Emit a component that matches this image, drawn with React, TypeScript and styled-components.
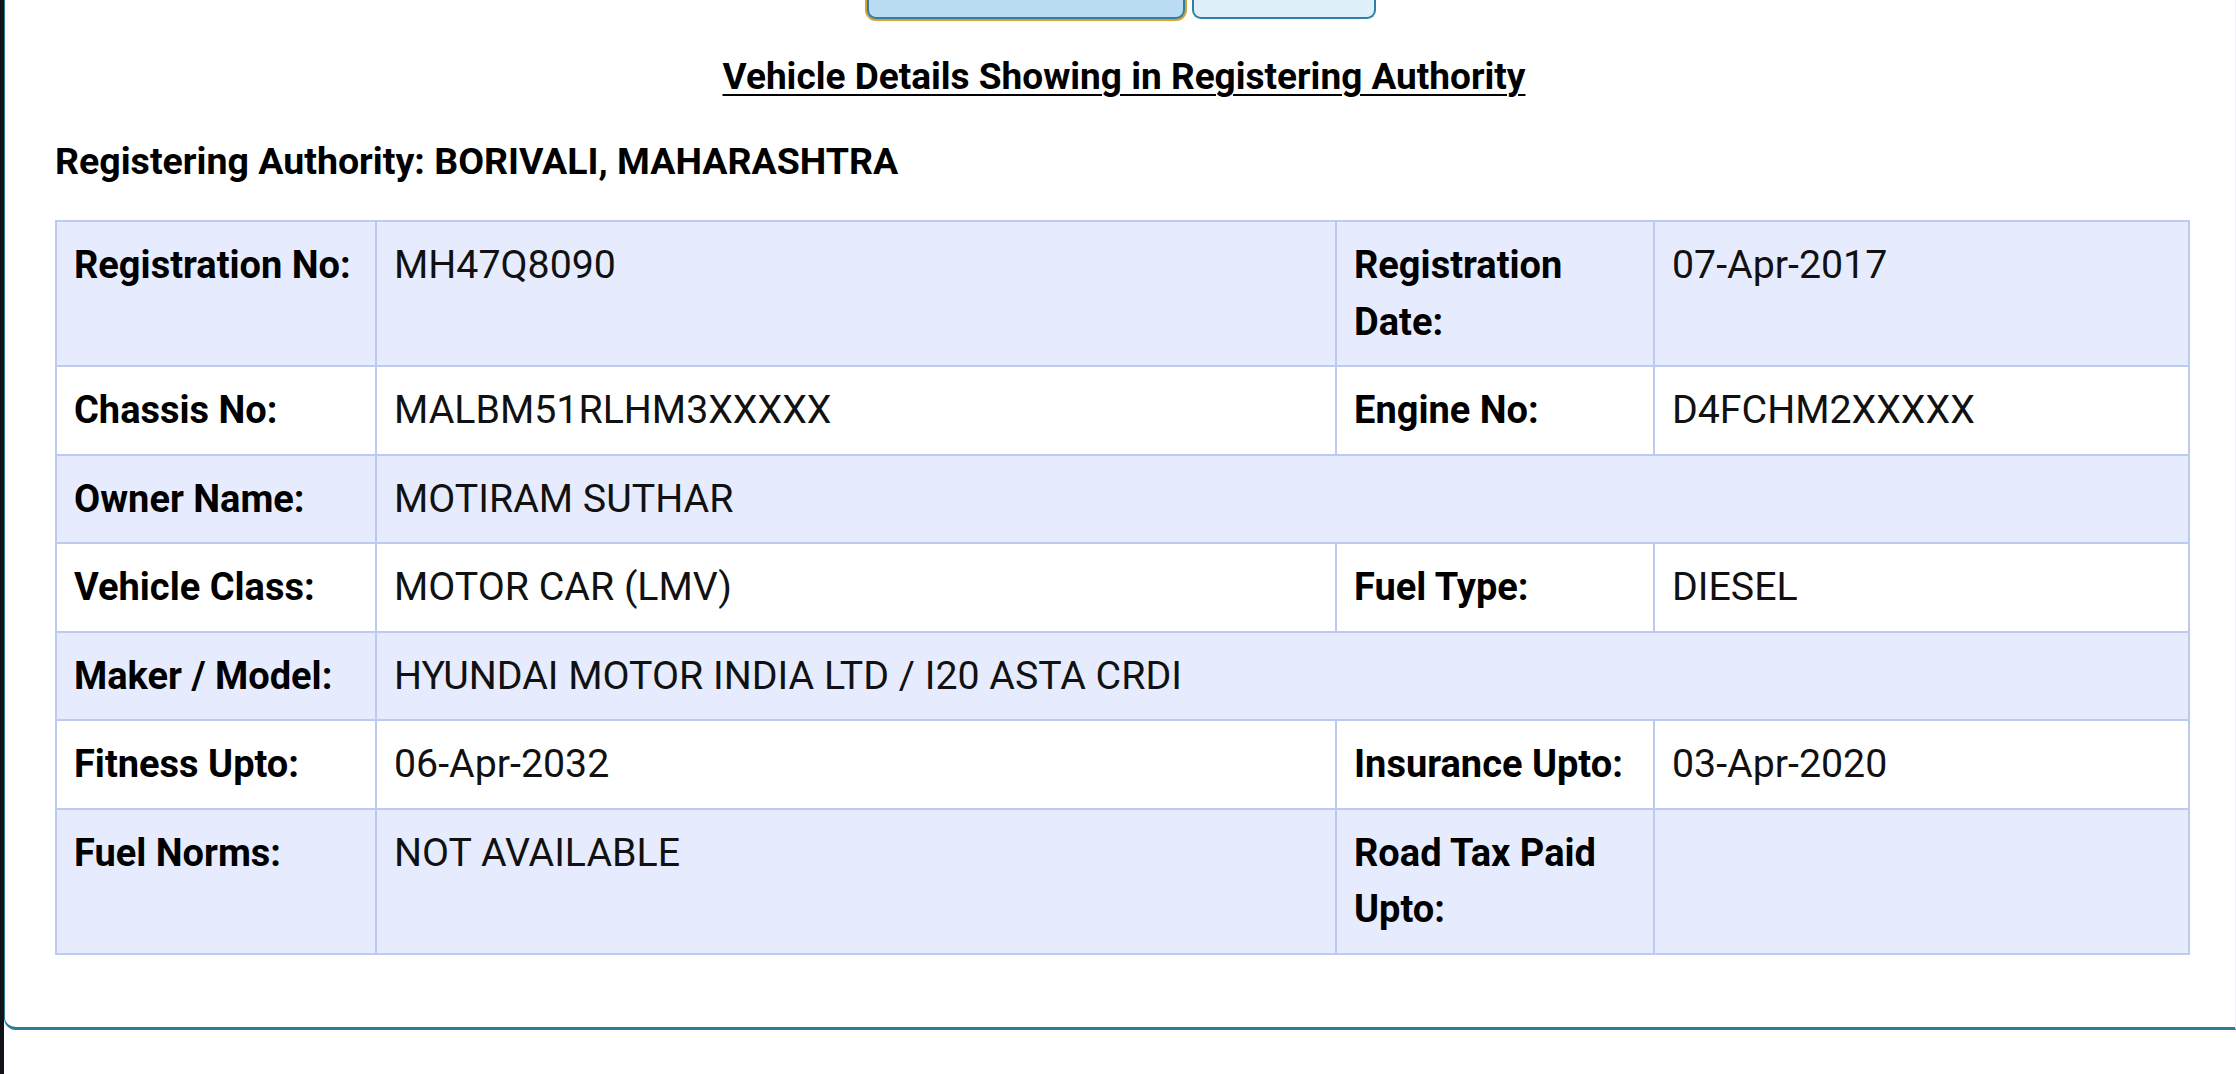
import React from "react";
import styled, { createGlobalStyle } from "styled-components";

const GlobalStyle = createGlobalStyle`
  html, body {
    margin: 0;
    padding: 0;
    background: #fefefe;
  }
  body {
    font-family: Roboto, "Liberation Sans", sans-serif;
    color: #000;
  }
`;

const Page = styled.div`
  min-height: 1074px;
  border-left: 4px solid #101418;
  box-sizing: border-box;
  overflow: hidden;
`;

const Panel = styled.div`
  background: #fff;
  border-left: 1px solid #2e7b98;
  border-bottom: 3px solid #2e7b98;
  border-right: 1px solid #eef1f6;
  border-bottom-left-radius: 12px;
  padding: 0 42px 72px 50px;
  display: flex;
  flex-direction: column;
`;

const Tabs = styled.div`
  display: flex;
  justify-content: center;
  gap: 7px;
  margin-top: -27px;
  padding-right: 6px;
`;

const Tab = styled.div<{ $active?: boolean }>`
  height: 46px;
  box-sizing: border-box;
  border: 2px solid #2e7ea6;
  border-top: none;
  border-radius: 0 0 9px 9px;
  background: ${(p) => (p.$active ? "#b9dcf3" : "#dff0fb")};
  box-shadow: ${(p) => (p.$active ? "0 0 0 2px #d6a233" : "none")};
  width: ${(p) => (p.$active ? "318px" : "184px")};
`;

const Title = styled.h2`
  margin: 36px 0 0;
  text-align: center;
  font-size: 37px;
  line-height: 44px;
  font-weight: 700;
  text-decoration: underline;
  text-underline-offset: 5px;
  text-decoration-thickness: 2px;
`;

const Authority = styled.div`
  margin-top: 40px;
  font-size: 37.5px;
  line-height: 44px;
  font-weight: 700;
`;

const Table = styled.table`
  margin-top: 37px;
  width: 2133px;
  border-collapse: collapse;
  table-layout: fixed;
  line-height: 56.5px;
`;

const Row = styled.tr<{ $shaded?: boolean }>`
  background: ${(p) => (p.$shaded ? "#e6ecfd" : "#fff")};
`;

const Label = styled.th`
  border: 2px solid #bccbef;
  padding: 15px 17px;
  text-align: left;
  vertical-align: top;
  font-size: 38px;
  font-weight: 700;
  color: #000;
`;

const Value = styled.td`
  border: 2px solid #bccbef;
  padding: 15px 17px;
  vertical-align: top;
  font-size: 39.3px;
  font-weight: 400;
  color: #111;
`;

type Cell = [string, string];
const rows: Cell[][] = [
  [["Registration No:", "MH47Q8090"], ["Registration Date:", "07-Apr-2017"]],
  [["Chassis No:", "MALBM51RLHM3XXXXX"], ["Engine No:", "D4FCHM2XXXXX"]],
  [["Owner Name:", "MOTIRAM SUTHAR"]],
  [["Vehicle Class:", "MOTOR CAR (LMV)"], ["Fuel Type:", "DIESEL"]],
  [["Maker / Model:", "HYUNDAI MOTOR INDIA LTD / I20 ASTA CRDI"]],
  [["Fitness Upto:", "06-Apr-2032"], ["Insurance Upto:", "03-Apr-2020"]],
  [["Fuel Norms:", "NOT AVAILABLE"], ["Road Tax Paid Upto:", ""]],
];

export default function App() {
  return (
    <>
      <GlobalStyle />
      <Page>
        <Panel>
          <Tabs>
            <Tab $active />
            <Tab />
          </Tabs>
          <Title>Vehicle Details Showing in Registering Authority</Title>
          <Authority>Registering Authority: BORIVALI, MAHARASHTRA</Authority>
          <Table>
            <colgroup>
              <col style={{ width: 320 }} />
              <col style={{ width: 960 }} />
              <col style={{ width: 318 }} />
              <col style={{ width: 535 }} />
            </colgroup>
            <tbody>
              {rows.map((cells, i) => (
                <Row key={i} $shaded={i % 2 === 0}>
                  {cells.length === 1 ? (
                    <>
                      <Label>{cells[0][0]}</Label>
                      <Value colSpan={3}>{cells[0][1]}</Value>
                    </>
                  ) : (
                    cells.map(([label, value]) => (
                      <React.Fragment key={label}>
                        <Label>{label}</Label>
                        <Value>{value}</Value>
                      </React.Fragment>
                    ))
                  )}
                </Row>
              ))}
            </tbody>
          </Table>
        </Panel>
      </Page>
    </>
  );
}
